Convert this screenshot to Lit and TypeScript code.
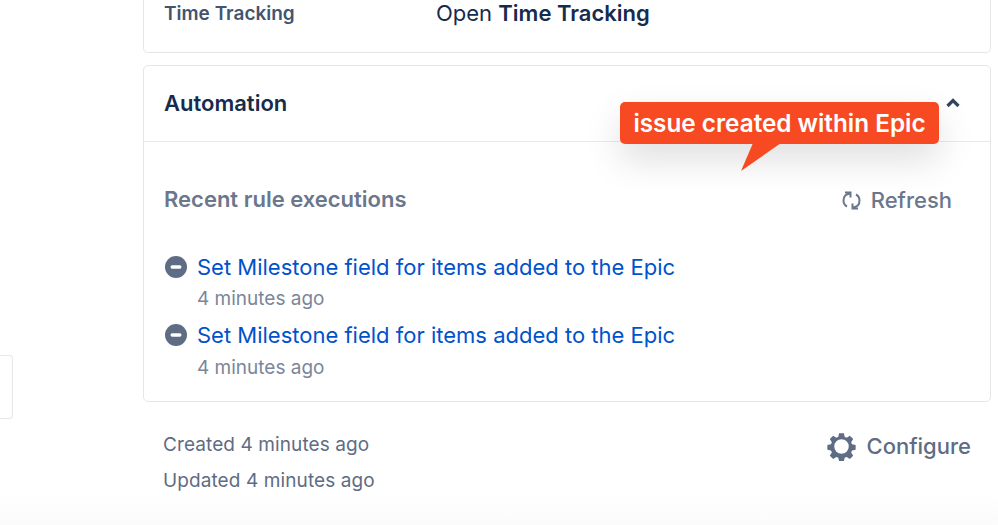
import { LitElement, html, css } from "lit";
import { customElement } from "lit/decorators.js";

@customElement("app-root")
export class AppRoot extends LitElement {
  static styles = css`
    :host {
      display: block;
      width: 998px;
      height: 525px;
      overflow: hidden;
      position: relative;
      background: linear-gradient(#fff 0, #fff 490px, #fbfbfb 525px);
      font-family: Inter, "Noto Sans", sans-serif;
      color: #172b4d;
      -webkit-font-smoothing: antialiased;
    }
    .page { display: flex; align-items: flex-start; height: 525px; }
    .left { width: 143px; flex: none; }
    .stub {
      width: 12px; height: 62px; margin-top: 355px;
      border: 1px solid #e6e7ea; border-left: none;
      border-radius: 0 4px 4px 0;
    }
    .main { width: 848px; flex: none; display: flex; flex-direction: column; }
    .card { border: 1px solid #e4e6ea; border-radius: 5px; box-sizing: border-box; }
    .tt {
      height: 53px; border-top: none; border-radius: 0 0 5px 5px;
      display: flex; padding-left: 20px;
    }
    .tt-label { width: 272px; font-size: 19px; font-weight: 600; color: #44546f; line-height: 28px; }
    .tt-val { font-size: 22px; line-height: 27px; color: #172b4d; }
    .tt-val b { font-weight: 600; }
    .auto { margin-top: 12px; height: 337px; }
    .auto-head {
      height: 76px; box-sizing: border-box; border-bottom: 1px solid #e8e9ec;
      display: flex; align-items: center; justify-content: space-between;
      padding: 0 30px 0 20px;
    }
    .auto-head h2 { margin: 0 0 2px; font-size: 22px; font-weight: 600; color: #172b4d; }
    .chev { margin-top: -2px; display: block; }
    .recent {
      display: flex; align-items: center; justify-content: space-between;
      padding: 43px 38px 0 20px; height: 29px;
    }
    .recent h3 { margin: 0 0 1px; font-size: 22px; font-weight: 600; color: #6b778c; }
    .refresh { display: flex; align-items: center; gap: 10px; font-size: 22px; font-weight: 500; color: #6b778c; margin-top: 1px; }
    .list { margin-top: 42px; padding-left: 21px; }
    .item { display: grid; grid-template-columns: 33px 1fr; height: 68px; }
    .item svg { display: block; }
    .item > div { margin-top: -5px; margin-left: -1px; }
    .link { font-size: 22px; line-height: 32px; color: #0052cc; }
    .ago { font-size: 19px; line-height: 30px; color: #7a869a; margin-top: 1px; }
    .item + .item .ago { margin-top: 2px; }
    .foot { display: flex; justify-content: space-between; padding: 23px 20px 0 20px; }
    .meta { font-size: 19px; line-height: 36px; color: #5e6c84; letter-spacing: .1px; margin-top: 2px; }
    .config { display: flex; align-items: center; gap: 11px; font-size: 22px; font-weight: 500; color: #5e6c84; height: 36px; margin-top: 3px; }
    .tip {
      position: absolute; left: 620px; top: 102px; width: 319px; height: 42px;
      box-sizing: border-box; background: #f74a23; border-radius: 5px; color: #fff;
      font-size: 24.3px; font-weight: 600; line-height: 42px; text-align: center;
      box-shadow: 0 16px 36px rgba(0,0,0,.13);
    }
    .tail { position: absolute; left: 741px; top: 143px; display: block; }
  `;

  item() {
    return html`<div class="item">
      <svg width="22" height="22" viewBox="0 0 22 22"><circle cx="11" cy="11" r="11" fill="#5e6c84"/><rect x="5.500" y="9.300" width="11" height="3.400" rx="1.700" fill="#fff"/></svg>
      <div>
        <div class="link">Set Milestone field for items added to the Epic</div>
        <div class="ago">4 minutes ago</div>
      </div>
    </div>`;
  }

  render() {
    return html`
      <div class="page">
        <div class="left"><div class="stub"></div></div>
        <div class="main">
          <div class="card tt">
            <div class="tt-label">Time Tracking</div>
            <div class="tt-val">Open <b>Time Tracking</b></div>
          </div>
          <div class="card auto">
            <div class="auto-head">
              <h2>Automation</h2>
              <svg class="chev" width="14" height="10" viewBox="0 0 14 10"><path d="M1.500 8 7 2.500 12.500 8" fill="none" stroke="#344563" stroke-width="3.200"/></svg>
            </div>
            <div class="recent">
              <h3>Recent rule executions</h3>
              <div class="refresh">
                <svg width="19" height="19" viewBox="0 0 19 19" fill="none" stroke="#6b778c" stroke-width="2"><path d="M8 2.500C4 3 1.500 5.800 1.500 9.500c0 2.500 1.200 4.800 3.500 6"/><path d="M3 1.500h5.500v5"/><path d="M11 16.500c4-.5 6.500-3.300 6.500-7 0-2.500-1.200-4.800-3.500-6"/><path d="M16 17.500h-5.500v-5"/></svg>
                Refresh
              </div>
            </div>
            <div class="list">${this.item()}${this.item()}</div>
          </div>
          <div class="foot">
            <div class="meta">Created 4 minutes ago<br />Updated 4 minutes ago</div>
            <div class="config">
              <svg width="29" height="29" viewBox="0 0 24 24"><path fill="#5e6c84" fill-rule="evenodd" d="M10 1h4l.6 3 1.700.7 2.600-1.700 2.800 2.800-1.700 2.600.7 1.700 3 .6v4l-3 .6-.7 1.700 1.700 2.600-2.800 2.800-2.600-1.700-1.700.7-.6 3h-4l-.6-3-1.700-.7-2.600 1.700-2.800-2.800 1.700-2.600-.7-1.700-3-.6v-4l3-.6.7-1.700-1.700-2.600 2.800-2.800 2.600 1.700 1.700-.7zM12 6a6 6 0 1 0 0 12 6 6 0 0 0 0-12z"/></svg>
              Configure
            </div>
          </div>
        </div>
      </div>
      <div class="tip">issue created within Epic</div>
      <svg class="tail" width="40" height="29" viewBox="0 0 40 29"><path d="M12 0H40L0 28z" fill="#f74a23"/></svg>
    `;
  }
}
